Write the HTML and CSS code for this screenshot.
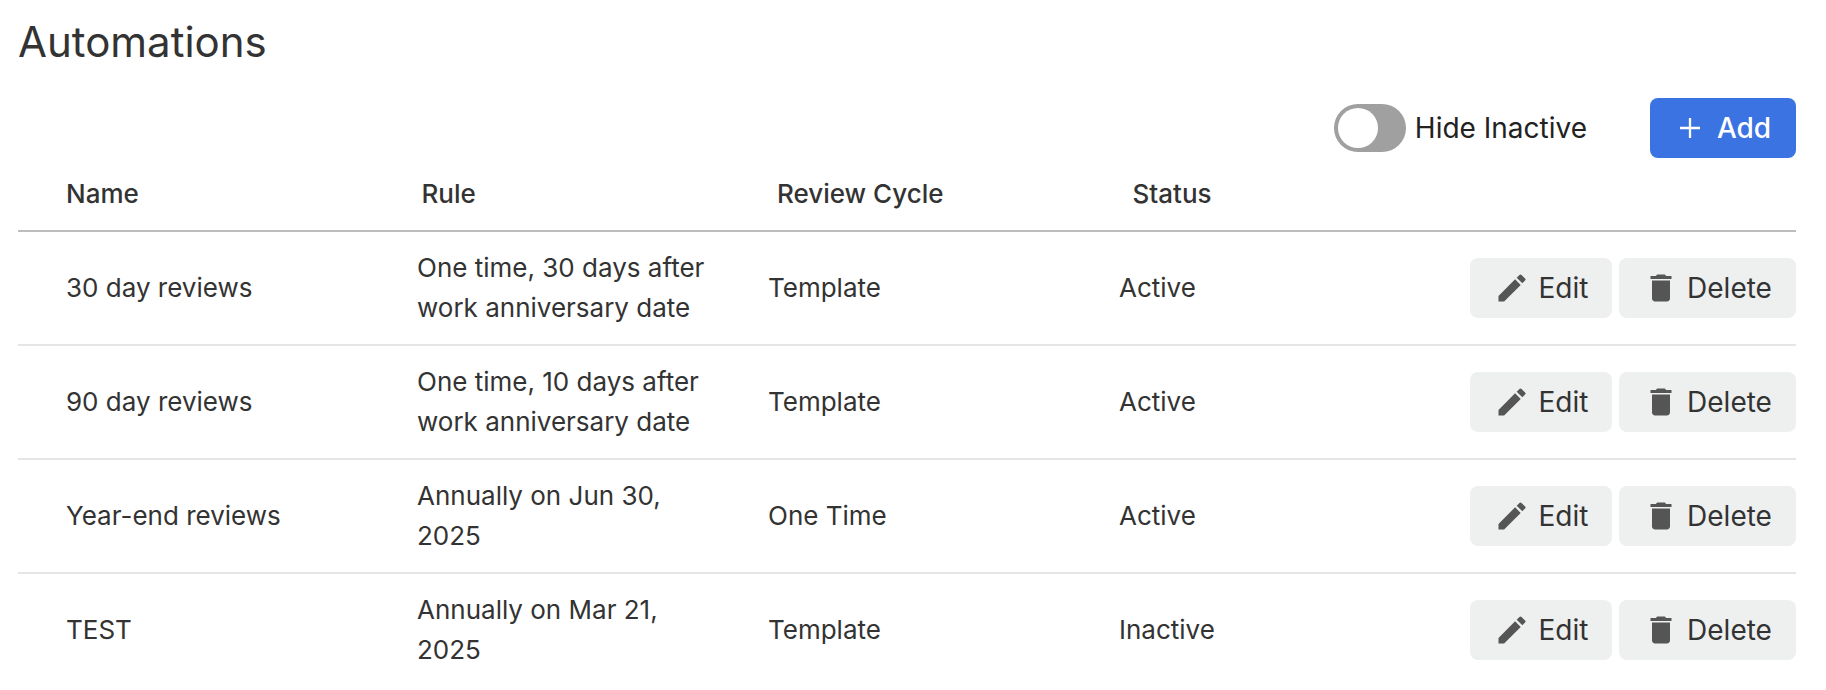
FILE: index.html
```html
<!DOCTYPE html>
<html lang="en">
<head>
<meta charset="utf-8">
<title>Automations</title>
<link rel="stylesheet" href="styles.css">
</head>
<body>
<main class="page">
  <h1 class="title">Automations</h1>
  <div class="toolbar">
    <label class="toggle-wrap">
      <span class="toggle"><span class="knob"></span></span>
      <span>Hide Inactive</span>
    </label>
    <button class="btn btn-add">
      <svg class="icon-plus" viewBox="0 0 24 24"><path d="M12 2v20M2 12h20"/></svg>
      <span>Add</span>
    </button>
  </div>
  <div class="head">
    <div>Name</div><div>Rule</div><div>Review Cycle</div><div>Status</div>
  </div>
  <div class="row">
    <div class="cell">30 day reviews</div>
    <div class="rule">One time, 30 days after work anniversary date</div>
    <div class="cell">Template</div>
    <div class="cell">Active</div>
    <div class="actions">
      <button class="btn btn-edit"><svg class="icon" viewBox="0 0 24 24"><path d="M3 17.25V21h3.75L17.81 9.94l-3.75-3.75L3 17.25zM20.71 7.04a1 1 0 0 0 0-1.41l-2.34-2.34a1 1 0 0 0-1.41 0l-1.83 1.83 3.75 3.75 1.83-1.83z"/></svg><span>Edit</span></button>
      <button class="btn btn-delete"><svg class="icon" viewBox="0 0 24 24"><path d="M6 19c0 1.1.9 2 2 2h8c1.1 0 2-.9 2-2V7H6v12zM19 4h-3.5l-1-1h-5l-1 1H5v2h14V4z"/></svg><span>Delete</span></button>
    </div>
  </div>
  <div class="row">
    <div class="cell">90 day reviews</div>
    <div class="rule">One time, 10 days after work anniversary date</div>
    <div class="cell">Template</div>
    <div class="cell">Active</div>
    <div class="actions">
      <button class="btn btn-edit"><svg class="icon" viewBox="0 0 24 24"><path d="M3 17.25V21h3.75L17.81 9.94l-3.75-3.75L3 17.25zM20.71 7.04a1 1 0 0 0 0-1.41l-2.34-2.34a1 1 0 0 0-1.41 0l-1.83 1.83 3.75 3.75 1.83-1.83z"/></svg><span>Edit</span></button>
      <button class="btn btn-delete"><svg class="icon" viewBox="0 0 24 24"><path d="M6 19c0 1.1.9 2 2 2h8c1.1 0 2-.9 2-2V7H6v12zM19 4h-3.5l-1-1h-5l-1 1H5v2h14V4z"/></svg><span>Delete</span></button>
    </div>
  </div>
  <div class="row">
    <div class="cell">Year-end reviews</div>
    <div class="rule">Annually on Jun 30, 2025</div>
    <div class="cell">One Time</div>
    <div class="cell">Active</div>
    <div class="actions">
      <button class="btn btn-edit"><svg class="icon" viewBox="0 0 24 24"><path d="M3 17.25V21h3.75L17.81 9.94l-3.75-3.75L3 17.25zM20.71 7.04a1 1 0 0 0 0-1.41l-2.34-2.34a1 1 0 0 0-1.41 0l-1.83 1.83 3.75 3.75 1.83-1.83z"/></svg><span>Edit</span></button>
      <button class="btn btn-delete"><svg class="icon" viewBox="0 0 24 24"><path d="M6 19c0 1.1.9 2 2 2h8c1.1 0 2-.9 2-2V7H6v12zM19 4h-3.5l-1-1h-5l-1 1H5v2h14V4z"/></svg><span>Delete</span></button>
    </div>
  </div>
  <div class="row row-last">
    <div class="cell">TEST</div>
    <div class="rule">Annually on Mar 21, 2025</div>
    <div class="cell">Template</div>
    <div class="cell">Inactive</div>
    <div class="actions">
      <button class="btn btn-edit"><svg class="icon" viewBox="0 0 24 24"><path d="M3 17.25V21h3.75L17.81 9.94l-3.75-3.75L3 17.25zM20.71 7.04a1 1 0 0 0 0-1.41l-2.34-2.34a1 1 0 0 0-1.41 0l-1.83 1.83 3.75 3.75 1.83-1.83z"/></svg><span>Edit</span></button>
      <button class="btn btn-delete"><svg class="icon" viewBox="0 0 24 24"><path d="M6 19c0 1.1.9 2 2 2h8c1.1 0 2-.9 2-2V7H6v12zM19 4h-3.5l-1-1h-5l-1 1H5v2h14V4z"/></svg><span>Delete</span></button>
    </div>
  </div>
</main>
</body>
</html>
```

FILE: styles.css
```css
* { box-sizing: border-box; }
html, body { margin: 0; padding: 0; background: #fff; }
body {
  font-family: Inter, "Liberation Sans", sans-serif;
  font-size: 26px;
  color: #333;
  overflow: hidden;
}
.page { padding: 16px 30px 0 18px; height: 690px; }
.title {
  margin: 0;
  padding-top: 1px;
  font-size: 42px;
  font-weight: 400;
  line-height: 50px;
  height: 82px;
  color: #333;
}
.toolbar {
  display: flex;
  justify-content: flex-end;
  align-items: center;
  height: 60px;
  gap: 63px;
}
.toggle-wrap { display: flex; align-items: center; gap: 9px; font-size: 28px; color: #222; }
.toggle {
  display: flex;
  align-items: center;
  width: 72px;
  height: 48px;
  padding: 4px;
  border-radius: 24px;
  background: #a0a0a0;
}
.knob { width: 40px; height: 40px; border-radius: 50%; background: #fff; }
.btn {
  display: inline-flex;
  align-items: center;
  justify-content: center;
  height: 60px;
  border: 0;
  border-radius: 8px;
  font: inherit;
  font-size: 28px;
  cursor: pointer;
}
.btn-add { width: 146px; gap: 15px; padding: 0 0 0 3px; background: #3b73e2; color: #fff; font-weight: 500; }
.icon-plus { width: 24px; height: 24px; fill: none; stroke: #fff; stroke-width: 2.3; }
.head {
  display: grid;
  grid-template-columns: repeat(4, 355.5px);
  align-items: center;
  height: 74px;
  padding: 0 0 2px 48px;
  border-bottom: 2px solid #bdbdbd;
  font-size: 26px;
  font-weight: 500;
}
.row {
  display: grid;
  grid-template-columns: repeat(4, 351px) 1fr;
  align-items: center;
  height: 114px;
  padding-left: 48px;
  border-bottom: 2px solid #e6e6e6;
}
.row-last { border-bottom-color: transparent; }
.cell { padding-bottom: 2px; }
.rule { max-width: 300px; line-height: 40px; }
.actions { display: flex; justify-content: flex-end; gap: 7px; }
.btn-edit { width: 142px; gap: 9px; background: #eeefef; color: #333; }
.btn-delete { width: 177px; gap: 8px; background: #eeefef; color: #333; }
.icon { width: 36px; height: 36px; fill: #555; flex: none; }
```
